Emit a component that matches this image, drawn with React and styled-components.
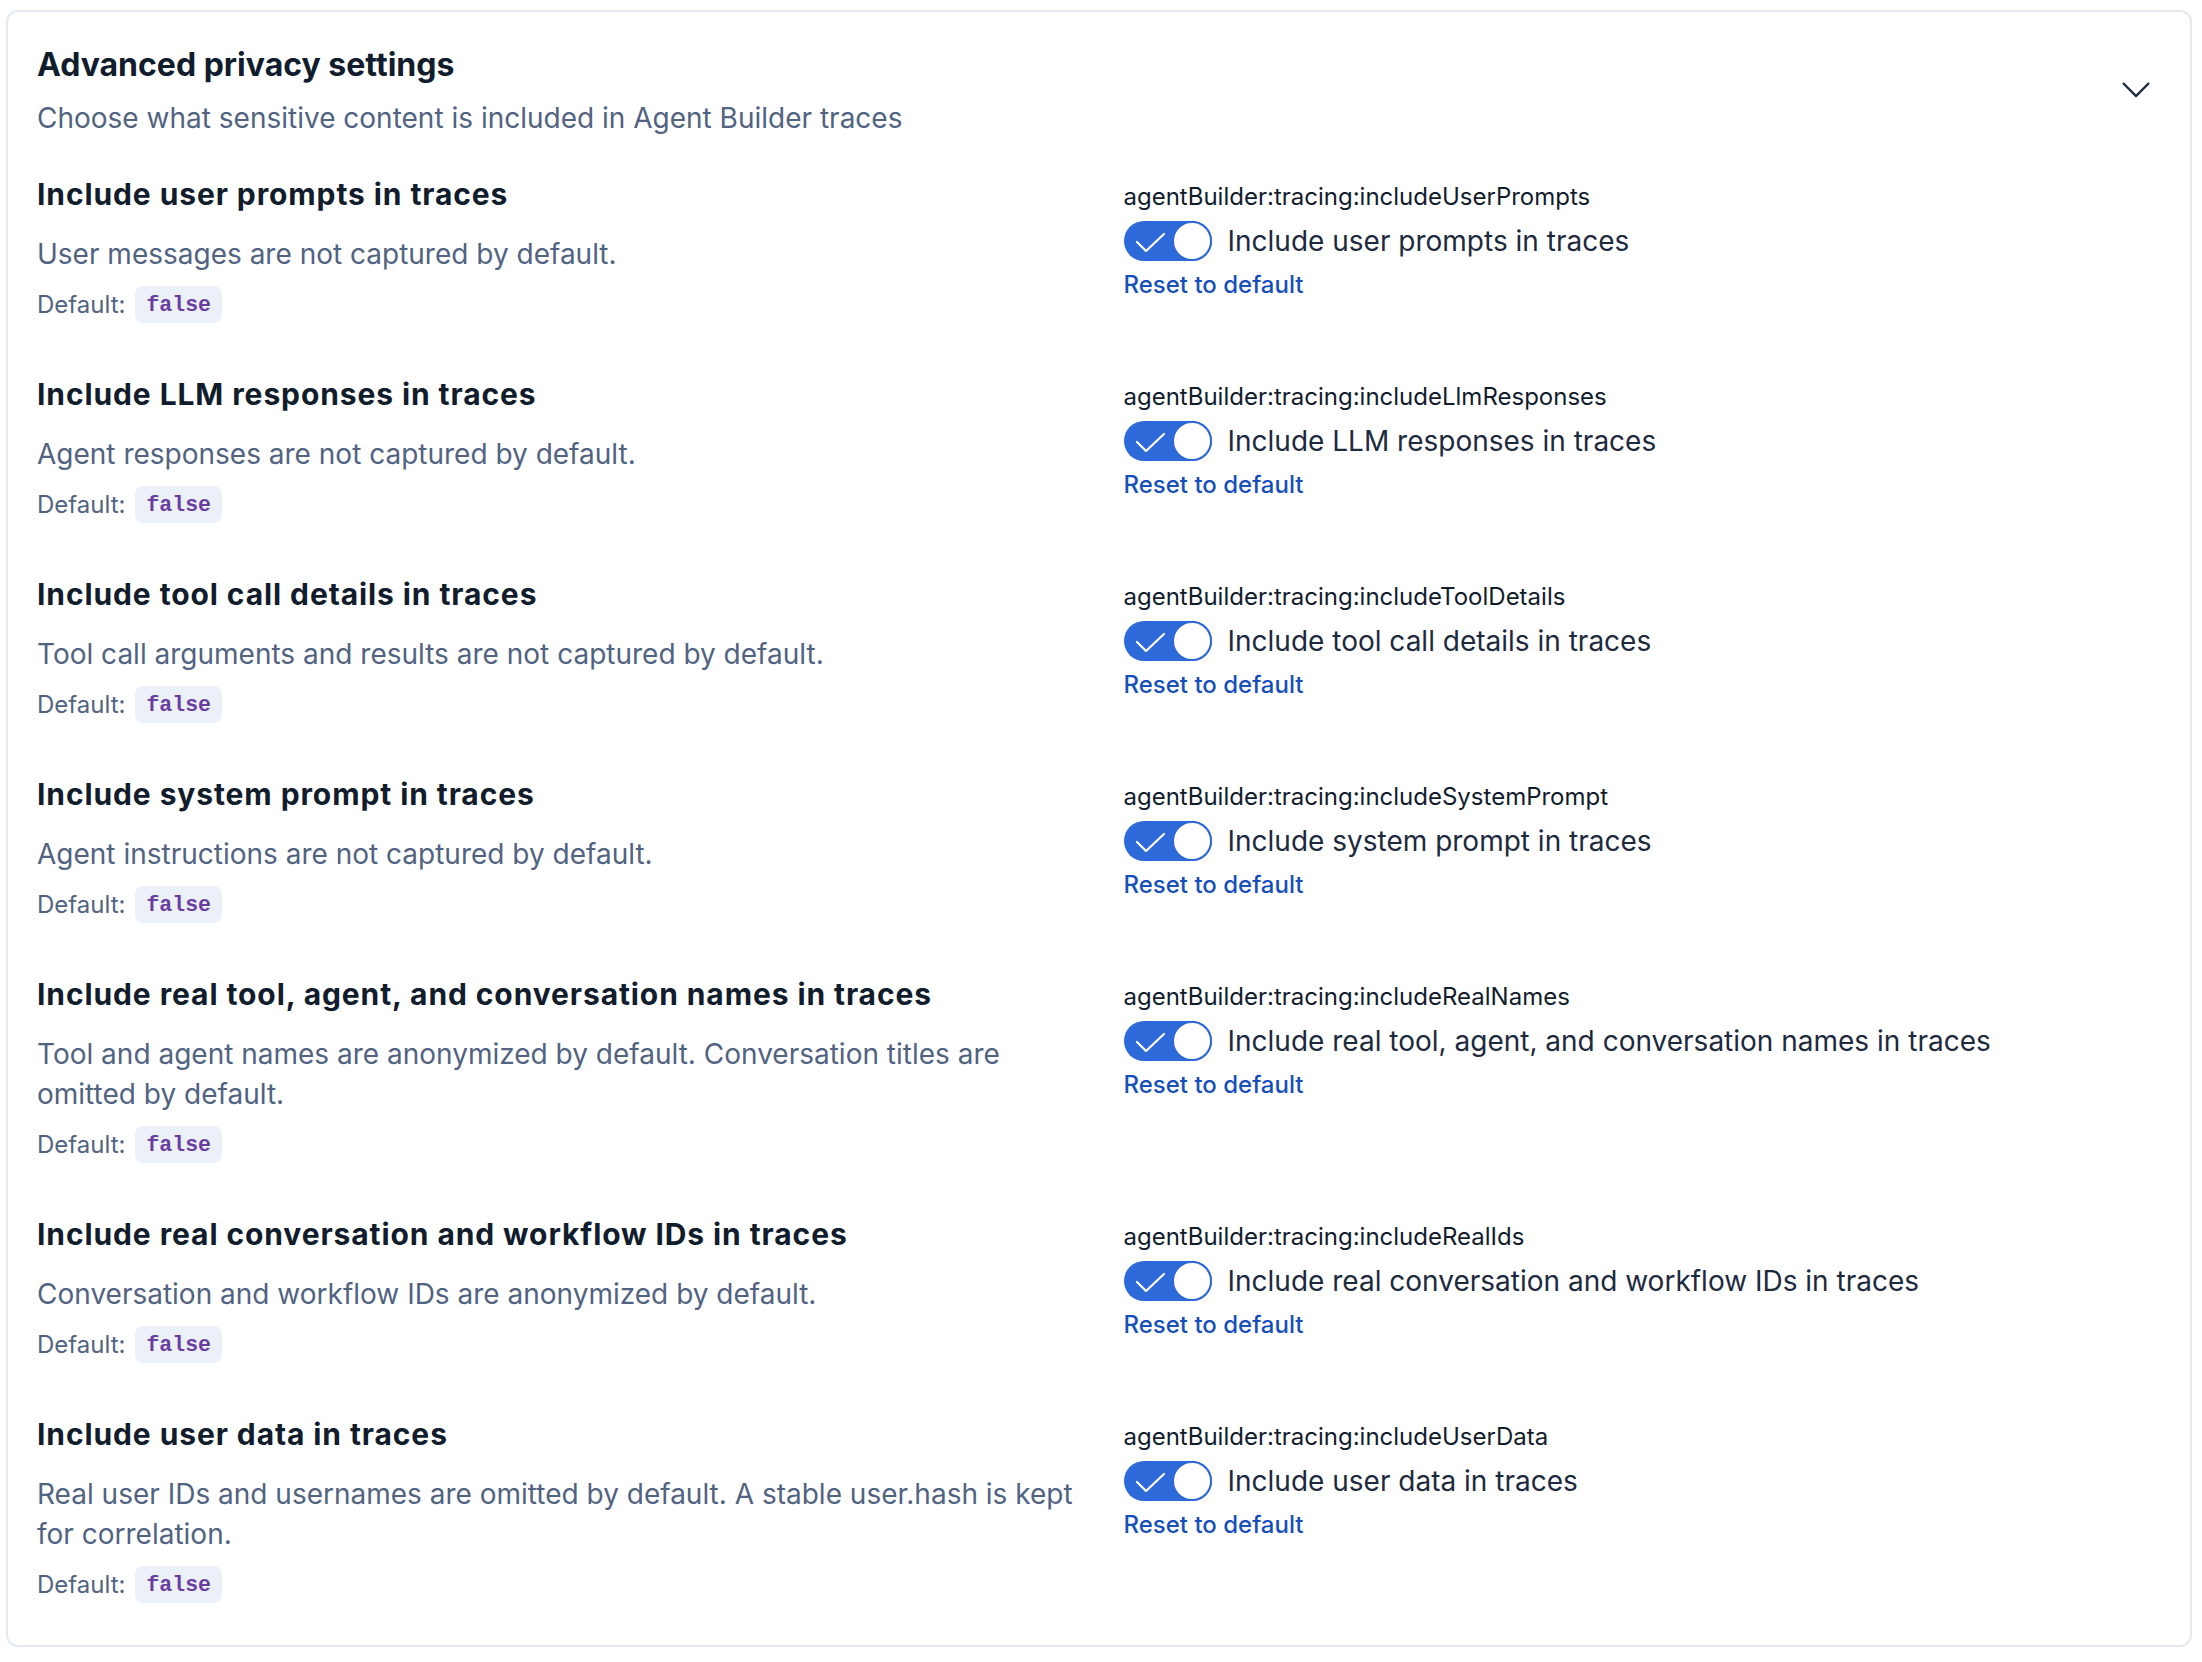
import React from 'react';
import styled, { createGlobalStyle } from 'styled-components';

const GlobalStyle = createGlobalStyle`
  body {
    margin: 0;
    background: #ffffff;
    font-family: Inter, "Noto Sans", sans-serif;
    -webkit-font-smoothing: antialiased;
  }
`;

const settings = [
  {
    title: 'Include user prompts in traces',
    description: 'User messages are not captured by default.',
    settingKey: 'agentBuilder:tracing:includeUserPrompts',
  },
  {
    title: 'Include LLM responses in traces',
    description: 'Agent responses are not captured by default.',
    settingKey: 'agentBuilder:tracing:includeLlmResponses',
  },
  {
    title: 'Include tool call details in traces',
    description: 'Tool call arguments and results are not captured by default.',
    settingKey: 'agentBuilder:tracing:includeToolDetails',
  },
  {
    title: 'Include system prompt in traces',
    description: 'Agent instructions are not captured by default.',
    settingKey: 'agentBuilder:tracing:includeSystemPrompt',
  },
  {
    title: 'Include real tool, agent, and conversation names in traces',
    description:
      'Tool and agent names are anonymized by default. Conversation titles are omitted by default.',
    settingKey: 'agentBuilder:tracing:includeRealNames',
  },
  {
    title: 'Include real conversation and workflow IDs in traces',
    description: 'Conversation and workflow IDs are anonymized by default.',
    settingKey: 'agentBuilder:tracing:includeRealIds',
  },
  {
    title: 'Include user data in traces',
    description:
      'Real user IDs and usernames are omitted by default. A stable user.hash is kept for correlation.',
    settingKey: 'agentBuilder:tracing:includeUserData',
  },
];

const Toggle = () => (
  <Switch role="switch" aria-checked="true">
    <svg width="88" height="40" viewBox="0 0 88 40">
      <polyline
        points="13,21 22,30 40,13"
        fill="none"
        stroke="#ffffff"
        strokeWidth="2.2"
        strokeLinecap="round"
        strokeLinejoin="round"
      />
    </svg>
    <Knob />
  </Switch>
);

const SettingRow = ({ title, description, settingKey }) => (
  <Row>
    <Info>
      <RowTitle>{title}</RowTitle>
      <Description>{description}</Description>
      <DefaultLine>
        Default:
        <Code>false</Code>
      </DefaultLine>
    </Info>
    <Control>
      <KeyName>{settingKey}</KeyName>
      <ToggleLine>
        <Toggle />
        <ToggleLabel>{title}</ToggleLabel>
      </ToggleLine>
      <ResetLink href="#">Reset to default</ResetLink>
    </Control>
  </Row>
);

const App = () => {
  return (
    <Page>
      <GlobalStyle />
      <Panel>
        <Header>
          <div>
            <PanelTitle>Advanced privacy settings</PanelTitle>
            <Subtitle>Choose what sensitive content is included in Agent Builder traces</Subtitle>
          </div>
          <Chevron aria-label="Collapse">
            <svg width="28" height="16" viewBox="0 0 28 16">
              <polyline
                points="1,1 14,14 27,1"
                fill="none"
                stroke="#1d2a3e"
                strokeWidth="2.4"
              />
            </svg>
          </Chevron>
        </Header>
        <Rows>
          {settings.map((s) => (
            <SettingRow key={s.settingKey} {...s} />
          ))}
        </Rows>
      </Panel>
    </Page>
  );
};

const Page = styled.div`
  padding: 10px 10px 12px 6px;
`;

const Panel = styled.section`
  border: 2px solid #e3e8f2;
  border-radius: 12px;
  padding: 29px 28px 42px 29px;
  background: #ffffff;
`;

const Header = styled.header`
  display: flex;
  justify-content: space-between;
  align-items: center;
`;

const PanelTitle = styled.h2`
  margin: 0;
  font-size: 32px;
  line-height: 48px;
  font-weight: 700;
  color: #111c2c;
`;

const Subtitle = styled.p`
  margin: 9px 0 0;
  font-size: 28px;
  line-height: 40px;
  color: #516381;
`;

const Chevron = styled.button`
  display: flex;
  align-items: center;
  justify-content: center;
  width: 40px;
  height: 40px;
  margin-right: 6px;
  padding: 0;
  border: none;
  background: none;
`;

const Rows = styled.div`
  display: flex;
  flex-direction: column;
  gap: 51px;
  margin-top: 36px;
`;

const Row = styled.div`
  display: grid;
  grid-template-columns: 1fr 1fr;
  column-gap: 48px;
`;

const Info = styled.div`
  display: flex;
  flex-direction: column;
`;

const RowTitle = styled.h3`
  margin: 0;
  font-size: 30px;
  line-height: 40px;
  letter-spacing: 0.9px;
  font-weight: 700;
  color: #111c2c;
`;

const Description = styled.p`
  margin: 20px 0 0;
  font-size: 28px;
  line-height: 40px;
  color: #516381;
`;

const DefaultLine = styled.div`
  display: flex;
  align-items: center;
  gap: 10px;
  margin-top: 12px;
  font-size: 24px;
  color: #516381;
`;

const Code = styled.code`
  display: inline-flex;
  align-items: center;
  height: 37px;
  padding: 0 11px;
  border-radius: 8px;
  background: #ecf1f9;
  color: #6a3ea1;
  font-family: "Liberation Mono", "DejaVu Sans Mono", monospace;
  font-weight: 700;
  font-size: 21.5px;
`;

const Control = styled.div`
  display: flex;
  flex-direction: column;
  align-items: flex-start;
  padding-top: 7px;
`;

const KeyName = styled.div`
  font-size: 24px;
  line-height: 32px;
  color: #111c2c;
`;

const ToggleLine = styled.div`
  display: flex;
  align-items: center;
  gap: 16px;
  margin-top: 8px;
`;

const Switch = styled.span`
  position: relative;
  display: block;
  width: 88px;
  height: 40px;
  border-radius: 20px;
  background: #2d69d9;

  svg {
    display: block;
  }
`;

const Knob = styled.span`
  position: absolute;
  top: 0;
  right: 0;
  box-sizing: border-box;
  width: 40px;
  height: 40px;
  border-radius: 50%;
  border: 2px solid #2d69d9;
  background: #ffffff;
`;

const ToggleLabel = styled.span`
  font-size: 28px;
  line-height: 40px;
  color: #1d2a3e;
`;

const ResetLink = styled.a`
  margin-top: 8px;
  font-size: 24px;
  line-height: 32px;
  font-weight: 500;
  color: #1750ba;
  text-decoration: none;
`;

export default App;
